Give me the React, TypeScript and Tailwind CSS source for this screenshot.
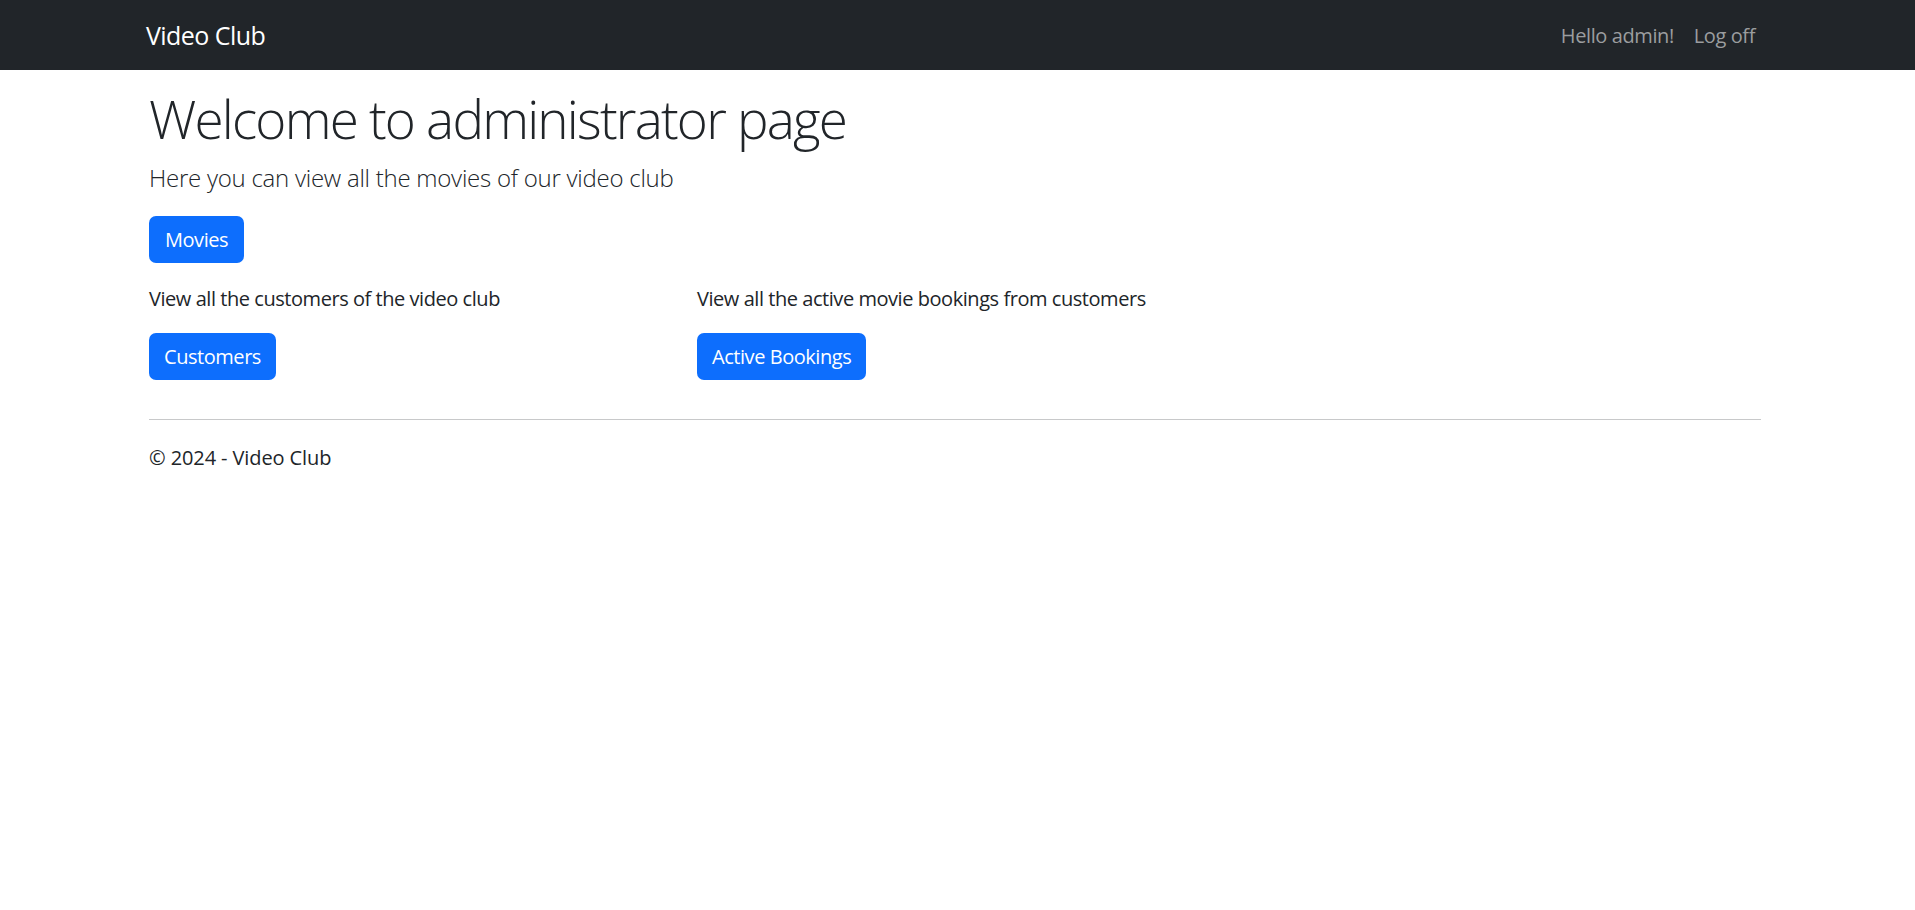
export default function App() {
  return (
    <div className="min-h-[910px] bg-white text-[#212529] font-['Open_Sans',sans-serif]">
      {/* Navbar */}
      <nav className="flex h-[70px] items-center justify-between bg-[#212529] pl-[146px] pr-[150px]">
        <a className="text-[25px] leading-[37px] tracking-[-0.55px] text-white">Video Club</a>
        <ul className="mt-[2px] flex text-[20px] leading-[30px] tracking-[-0.4px] text-[#9b9d9f]">
          <li className="px-[10px]">Hello admin!</li>
          <li className="px-[10px]">Log off</li>
        </ul>
      </nav>

      {/* Main */}
      <main className="ml-[149px] w-[1612px] pt-[17px] pb-[20px]">
        <h1 className="mb-[9px] text-[53px] font-light leading-[64px] tracking-[-1.8px]">
          Welcome to administrator page
        </h1>
        <p className="mb-[20px] text-[24px] font-light leading-[36px] tracking-[-0.25px]">
          Here you can view all the movies of our video club
        </p>
        <button className="rounded-[7px] bg-[#0d6efd] px-[16px] py-[8.5px] text-[20px] leading-[30px] tracking-[-0.45px] text-white">
          Movies
        </button>

        <div className="mt-[21px] flex text-[20px] leading-[30px] tracking-[-0.45px]">
          <div className="w-[548px]">
            <p className="mb-[19px]">View all the customers of the video club</p>
            <button className="rounded-[7px] bg-[#0d6efd] px-[15px] py-[8.5px] text-white">Customers</button>
          </div>
          <div>
            <p className="mb-[19px]">View all the active movie bookings from customers</p>
            <button className="rounded-[7px] bg-[#0d6efd] px-[15px] py-[8.5px] text-white">Active Bookings</button>
          </div>
        </div>
      </main>

      {/* Footer */}
      <footer className="ml-[149px] w-[1612px]">
        <hr className="mt-[19px] border-t border-[#c8c9ca]" />
        <div className="text-[20px] leading-[75px] tracking-[-0.1px]">© 2024 - Video Club</div>
      </footer>
    </div>
  );
}
